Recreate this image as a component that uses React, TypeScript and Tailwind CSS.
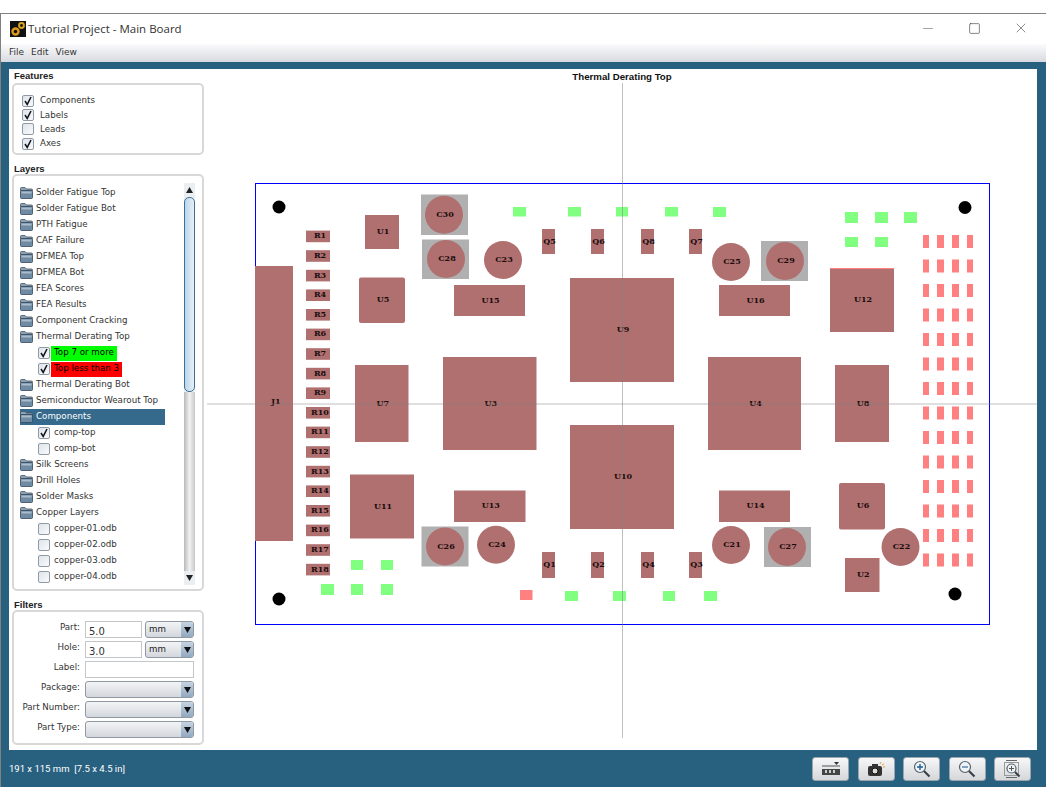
import { Minus, Square, X } from "lucide-react";

type Box = [string, number, number, number, number, number?];

const parts: Box[] = [
  ["J1", 255, 266, 293, 541],
  ["U1", 365, 215, 399, 249],
  ["U5", 359, 277.5, 405, 323, 2],
  ["U15", 454, 285, 525, 316],
  ["U7", 355, 365, 408.5, 442],
  ["U3", 443, 357, 536.5, 450],
  ["U9", 570, 278, 674, 382],
  ["U10", 570, 425, 674, 529],
  ["U4", 708, 357, 801, 450],
  ["U16", 719, 285, 790, 316],
  ["U14", 719, 490.5, 790, 522],
  ["U13", 454, 490.5, 525.5, 522],
  ["U11", 350, 474.5, 414, 538.5],
  ["U12", 830, 268, 894, 332],
  ["U8", 835, 365, 889, 442],
  ["U6", 839, 483, 885, 529.5, 2],
  ["U2", 845, 558, 879.5, 592],
];

const caps: [string, number, number][] = [
  ["C30", 444, 214.7],
  ["C28", 446, 259],
  ["C23", 503, 260],
  ["C25", 731, 262],
  ["C29", 785, 261],
  ["C26", 445, 546.5],
  ["C24", 496, 544.7],
  ["C21", 731, 545],
  ["C27", 787, 547],
  ["C22", 900.5, 547],
];

const capPads = [
  [421, 194.5, 47, 40.5],
  [422, 239.5, 47, 39.5],
  [761, 241, 47, 40],
  [421.5, 526.5, 47, 40],
  [764, 527, 47, 40],
];

const topQ: [string, number][] = [["Q5", 542], ["Q6", 591], ["Q8", 641], ["Q7", 689]];
const botQ: [string, number][] = [["Q1", 542], ["Q2", 591], ["Q4", 641], ["Q3", 689]];

const greens = [
  [513, 207, 13, 9.5], [568, 207, 13, 9.5], [616, 207, 12, 9.5], [665, 207, 13, 9.5], [713, 207, 13, 10],
  [845, 212, 13, 11], [875, 212, 13, 11], [904, 212, 13, 11], [845, 237, 13, 10], [875, 237, 13, 10],
  [351, 560, 12, 10], [381, 560, 12, 10], [321, 584, 13, 11], [351, 584, 12, 11], [381, 584, 12, 11],
  [565, 591, 13, 10], [613, 591, 13, 10], [663, 591, 12, 10], [704, 591, 13, 10],
];

const padCols = [[923, 6], [937, 7], [952, 7], [967, 6]];

function Label({ text, x, y }: { text: string; x: number; y: number }) {
  return (
    <text x={x + 1} y={y + 2} textAnchor="middle" fill="#1a0c0c" className="font-['DejaVu_Serif'] text-[8px] font-bold">
      {text}
    </text>
  );
}

function Board() {
  return (
    <svg width="830" height="681" viewBox="207 69 830 681" className="block">
      <text x="622" y="80" textAnchor="middle" fill="#111" className="font-['Liberation_Sans'] text-[9.7px] font-bold">
        Thermal Derating Top
      </text>
      <rect x="255.5" y="183.5" width="734" height="441" fill="none" stroke="#0000ff" />
      {[[279, 207], [965, 207.5], [279, 599], [955, 594]].map(([cx, cy]) => (
        <circle key={cx + "-" + cy} cx={cx} cy={cy} r="6.5" fill="#000" />
      ))}
      {capPads.map(([x, y, w, h]) => (
        <rect key={x} x={x} y={y} width={w} height={h} fill="#b0b0b0" />
      ))}
      {caps.map(([name, cx, cy]) => (
        <g key={name}>
          <circle cx={cx} cy={cy} r="19" fill="#b07070" />
          <Label text={name} x={cx} y={cy} />
        </g>
      ))}
      {parts.map(([name, x1, y1, x2, y2, r]) => (
        <g key={name}>
          <rect x={x1} y={y1} width={x2 - x1} height={y2 - y1} rx={r ?? 0} fill="#b07070" />
          <Label text={name} x={name === "J1" ? 275 : (x1 + x2) / 2} y={name === "J1" ? 402 : (y1 + y2) / 2} />
        </g>
      ))}
      <line x1="830" y1="268.5" x2="894" y2="268.5" stroke="#ff8080" />
      {Array.from({ length: 18 }, (_, i) => {
        const y = 230.6 + i * 19.6;
        return (
          <g key={i}>
            <rect x="306" y={y} width="24" height="11.6" fill="#b07070" />
            <Label text={"R" + (i + 1)} x={319} y={y + 5.8} />
          </g>
        );
      })}
      {topQ.map(([name, x]) => (
        <g key={name}>
          <rect x={x} y="229" width="13" height="25" fill="#b07070" />
          <Label text={name} x={x + 6.5} y={241.5} />
        </g>
      ))}
      {botQ.map(([name, x]) => (
        <g key={name}>
          <rect x={x} y="552" width="13" height="26" fill="#b07070" />
          <Label text={name} x={x + 6.5} y={565} />
        </g>
      ))}
      {greens.map(([x, y, w, h]) => (
        <rect key={x + "-" + y} x={x} y={y} width={w} height={h} fill="#80ff80" />
      ))}
      <rect x="520" y="590" width="12.5" height="10" fill="#ff8080" />
      {padCols.map(([x, w]) =>
        Array.from({ length: 14 }, (_, i) => (
          <rect key={x + "-" + i} x={x} y={235 + i * 24.5} width={w} height="13" fill="#ff8080" />
        ))
      )}
      <line x1="207" y1="404" x2="1037" y2="404" stroke="#808080" strokeOpacity="0.5" />
      <line x1="622.5" y1="83" x2="622.5" y2="738" stroke="#808080" strokeOpacity="0.5" />
    </svg>
  );
}

function Check({ on }: { on?: boolean }) {
  return (
    <span className="relative flex h-[12px] w-[12px] shrink-0 items-center justify-center rounded-[2px] border border-[#8f9aa5] bg-gradient-to-br from-[#dfe5ec] to-[#f8f9fb]">
      {on && (
        <svg width="10" height="10" viewBox="0 0 10 10" className="block">
          <path d="M2 5 L4.2 8.4 L8 1" fill="none" stroke="#10151c" strokeWidth="1.5" />
        </svg>
      )}
    </span>
  );
}

function Folder() {
  return (
    <svg width="13" height="12" viewBox="0 0 13 12" className="block shrink-0">
      <path d="M0.5 3 V1.5 Q0.5 0.5 1.5 0.5 H5 L6.5 2 H11.5 Q12.5 2 12.5 3 V3.5 H0.5 Z" fill="#8fa3b5" stroke="#3f5364" strokeWidth="0.8" />
      <rect x="0.5" y="3.5" width="12" height="8" rx="1" fill="#6f8ba3" stroke="#34495b" strokeWidth="0.8" />
      <rect x="1.5" y="4.5" width="10" height="2" fill="#a9bccb" />
    </svg>
  );
}

function FolderRow({ text, selected }: { text: string; selected?: boolean }) {
  return (
    <div className={`flex h-[16px] w-[145px] items-center gap-[3px] ${selected ? "bg-[#356a8c] text-white" : "text-[#333]"}`}>
      <Folder />
      <span className="whitespace-nowrap">{text}</span>
    </div>
  );
}

function LeafRow({ text, on, bg }: { text: string; on?: boolean; bg?: string }) {
  return (
    <div className="flex h-[16px] items-center pl-[18px] text-[#333]">
      <Check on={on} />
      <span className={`ml-[1px] flex h-[15px] items-center whitespace-nowrap px-[3px] ${bg ?? ""}`}>{text}</span>
    </div>
  );
}

function Arrow({ down }: { down?: boolean }) {
  return (
    <div className="flex h-[14px] items-center justify-center bg-[#eceff2]">
      <svg width="7" height="6" viewBox="0 0 7 6" className="block">
        <path d={down ? "M0 0 H7 L3.5 6 Z" : "M0 6 H7 L3.5 0 Z"} fill="#222" />
      </svg>
    </div>
  );
}

function Combo({ value, wide }: { value?: string; wide?: boolean }) {
  return (
    <div className={`flex h-[17px] ${wide ? "w-[109px]" : "w-[49px]"} items-stretch overflow-hidden rounded-[3px] border border-[#8f98a3] bg-gradient-to-b from-[#f3f4f6] to-[#d3d7dc]`}>
      <span className="flex-1 pl-[3px] leading-[15px] text-[#222]">{value}</span>
      <span className="flex w-[12px] items-center justify-center bg-gradient-to-b from-[#c5d3e1] to-[#92a9c0]">
        <svg width="7" height="6" viewBox="0 0 7 6" className="block">
          <path d="M0 0 H7 L3.5 6 Z" fill="#111" />
        </svg>
      </span>
    </div>
  );
}

function Field({ value, wide }: { value?: string; wide?: boolean }) {
  return (
    <div className={`h-[17px] ${wide ? "w-[109px]" : "w-[57px]"} border border-[#c4c7ca] bg-white pl-[3px] text-[10px] leading-[19px] text-[#333]`}>
      {value}
    </div>
  );
}

function FilterRow({ label, children }: { label: string; children: React.ReactNode }) {
  return (
    <div className="flex h-[20px] items-start gap-[5px]">
      <span className="w-[64px] text-right leading-[12px] whitespace-nowrap text-[#333]">{label}</span>
      <div className="flex gap-[3px]">{children}</div>
    </div>
  );
}

function ToolBtn({ children }: { children: React.ReactNode }) {
  return (
    <button className="flex h-[24px] w-[37px] items-center justify-center rounded-[3px] border border-[#9aa5ae] bg-gradient-to-b from-[#f7f7f8] to-[#d5d7da]">
      {children}
    </button>
  );
}

function Lens({ sign }: { sign: "plus" | "minus" }) {
  return (
    <svg width="18" height="18" viewBox="0 0 18 18" className="block">
      <circle cx="7" cy="7" r="5.5" fill="#eef3f7" stroke="#56636e" strokeWidth="1.2" />
      <path d="M11 11 L16.5 16.5" stroke="#3a4249" strokeWidth="2.2" />
      <path d={sign === "plus" ? "M4 7 H10 M7 4 V10" : "M4 7 H10"} stroke={sign === "plus" ? "#1f5f99" : "#4f7ea8"} strokeWidth="1.4" />
    </svg>
  );
}

export default function App() {
  return (
    <div className="flex h-[794px] w-[1046px] flex-col overflow-hidden bg-white pt-[13px] pb-[7px] font-['DejaVu_Sans'] text-[8.7px]">
      <div className="flex flex-1 flex-col border-t border-l border-[#808080]">
        {/* title bar */}
        <header className="flex h-[30px] items-center bg-white pl-[9px]">
          <svg width="16" height="16" viewBox="0 0 16 16" className="block">
            <rect width="16" height="16" fill="#111" />
            <circle cx="5.5" cy="10.5" r="3" fill="none" stroke="#e09a18" strokeWidth="2.4" />
            <circle cx="11.5" cy="4.5" r="2.4" fill="none" stroke="#d9a520" strokeWidth="2" />
          </svg>
          <span className="ml-[2px] font-['Open_Sans'] text-[11.5px] text-[#333]">Tutorial Project - Main Board</span>
          <div className="ml-auto flex items-center gap-[30.5px] pr-[17px] pb-[2px] text-[#555]">
            <span className="flex w-[16px] justify-center">
              <Minus size={17} strokeWidth={0.8} />
            </span>
            <span className="flex w-[16px] justify-center">
              <Square size={13} strokeWidth={1} className="text-[#222]" />
            </span>
            <span className="flex w-[16px] justify-center">
              <X size={16} strokeWidth={1} />
            </span>
          </div>
        </header>
        {/* menu */}
        <nav className="flex h-[18px] items-center gap-[7px] bg-gradient-to-b from-[#fbfbfc] to-[#d8dae0] pl-[8px] text-[9px] text-[#333]">
          <span>File</span>
          <span>Edit</span>
          <span>View</span>
        </nav>
        <main className="flex flex-1 flex-col bg-[#28607f] pt-[7px] pl-[8px]">
          <div className="flex h-[681px] w-[1028px] bg-white">
            {/* left panel */}
            <aside className="flex w-[198px] shrink-0 flex-col px-[3px]">
              <h3 className="flex h-[14px] items-center pt-[1px] pl-[2px] font-['Liberation_Sans'] text-[9.5px] font-bold text-[#222]">Features</h3>
              <section className="h-[72px] rounded-[5px] border-2 border-[#d8d8d8] pt-[8.5px] pl-[8px] text-[#333]">
                {[["Components", true], ["Labels", true], ["Leads", false], ["Axes", true]].map(([t, on]) => (
                  <div key={t as string} className="flex h-[14.4px] items-center gap-[6px]">
                    <Check on={on as boolean} />
                    <span>{t as string}</span>
                  </div>
                ))}
              </section>
              <h3 className="flex h-[19px] items-end pl-[2px] font-['Liberation_Sans'] text-[9.5px] leading-[11px] font-bold text-[#222]">Layers</h3>
              <section className="flex h-[417px] rounded-[5px] border-2 border-[#d8d8d8] pl-[6px]">
                <div className="flex-1 overflow-hidden pt-[9px]">
                  <FolderRow text="Solder Fatigue Top" />
                  <FolderRow text="Solder Fatigue Bot" />
                  <FolderRow text="PTH Fatigue" />
                  <FolderRow text="CAF Failure" />
                  <FolderRow text="DFMEA Top" />
                  <FolderRow text="DFMEA Bot" />
                  <FolderRow text="FEA Scores" />
                  <FolderRow text="FEA Results" />
                  <FolderRow text="Component Cracking" />
                  <FolderRow text="Thermal Derating Top" />
                  <LeafRow text="Top 7 or more" on bg="bg-[#00ff00] text-black" />
                  <LeafRow text="Top less than 3" on bg="bg-[#ff0000] text-black" />
                  <FolderRow text="Thermal Derating Bot" />
                  <FolderRow text="Semiconductor Wearout Top" />
                  <FolderRow text="Components" selected />
                  <LeafRow text="comp-top" on />
                  <LeafRow text="comp-bot" />
                  <FolderRow text="Silk Screens" />
                  <FolderRow text="Drill Holes" />
                  <FolderRow text="Solder Masks" />
                  <FolderRow text="Copper Layers" />
                  <LeafRow text="copper-01.odb" />
                  <LeafRow text="copper-02.odb" />
                  <LeafRow text="copper-03.odb" />
                  <LeafRow text="copper-04.odb" />
                </div>
                <div className="mt-[7px] mr-[7px] flex h-[402px] w-[11px] flex-col bg-[#eceff2]">
                  <Arrow />
                  <div className="h-[195px] rounded-[5px] border border-[#3f6f96] bg-gradient-to-r from-[#bcd6ea] to-[#e6f0f8]" />
                  <div className="flex-1 bg-gradient-to-r from-[#b8b8b8] via-[#f2f2f2] to-[#c8c8c8]" />
                  <Arrow down />
                </div>
              </section>
              <h3 className="flex h-[19px] items-end pl-[2px] font-['Liberation_Sans'] text-[9.5px] leading-[11px] font-bold text-[#222]">Filters</h3>
              <section className="h-[135px] rounded-[5px] border-2 border-[#d8d8d8] pt-[9px] pl-[2px]">
                <FilterRow label="Part:">
                  <Field value="5.0" />
                  <Combo value="mm" />
                </FilterRow>
                <FilterRow label="Hole:">
                  <Field value="3.0" />
                  <Combo value="mm" />
                </FilterRow>
                <FilterRow label="Label:">
                  <Field wide />
                </FilterRow>
                <FilterRow label="Package:">
                  <Combo wide />
                </FilterRow>
                <FilterRow label="Part Number:">
                  <Combo wide />
                </FilterRow>
                <FilterRow label="Part Type:">
                  <Combo wide />
                </FilterRow>
              </section>
            </aside>
            <Board />
          </div>
          {/* status + toolbar */}
          <footer className="flex flex-1 items-center pr-[15px] text-white">
            <span className="pt-[2px] font-['Roboto'] text-[9.5px]">191 x 115 mm&nbsp; [7.5 x 4.5 in]</span>
            <div className="ml-auto flex gap-[8.5px]">
              <ToolBtn>
                <svg width="20" height="16" viewBox="0 0 20 16" className="block">
                  <path d="M13 1 H18 L15.5 4 Z" fill="#333" />
                  <path d="M1 5 H19" stroke="#555" strokeWidth="1" />
                  <rect x="1" y="8" width="18" height="6" fill="#444" />
                  <path d="M5 9 V12 M9 9 V12 M13 9 V12" stroke="#eee" strokeWidth="1.6" />
                </svg>
              </ToolBtn>
              <ToolBtn>
                <svg width="18" height="16" viewBox="0 0 18 16" className="block">
                  <rect x="1" y="5" width="14" height="10" rx="2" fill="#333" />
                  <rect x="5" y="3" width="6" height="3" fill="#333" />
                  <circle cx="8" cy="10" r="3" fill="#ddd" stroke="#111" />
                  <path d="M13 3 L14 1 M15 4 L17 3 M16 6 L18 6" stroke="#e8a33a" strokeWidth="1" />
                </svg>
              </ToolBtn>
              <ToolBtn>
                <Lens sign="plus" />
              </ToolBtn>
              <ToolBtn>
                <Lens sign="minus" />
              </ToolBtn>
              <ToolBtn>
                <svg width="20" height="20" viewBox="0 0 20 20" className="block">
                  <path d="M3 1.5 H14 M3 18.5 H14" stroke="#666" />
                  <rect x="1.5" y="3.5" width="14" height="13" fill="none" stroke="#999" />
                  <circle cx="8.5" cy="9.5" r="4.5" fill="#eef3f7" stroke="#56636e" strokeWidth="1.2" />
                  <path d="M12 13 L16.5 17.5" stroke="#3a4249" strokeWidth="2" />
                  <path d="M6 9.5 H11 M8.5 7 V12" stroke="#555" />
                </svg>
              </ToolBtn>
            </div>
          </footer>
        </main>
      </div>
    </div>
  );
}
